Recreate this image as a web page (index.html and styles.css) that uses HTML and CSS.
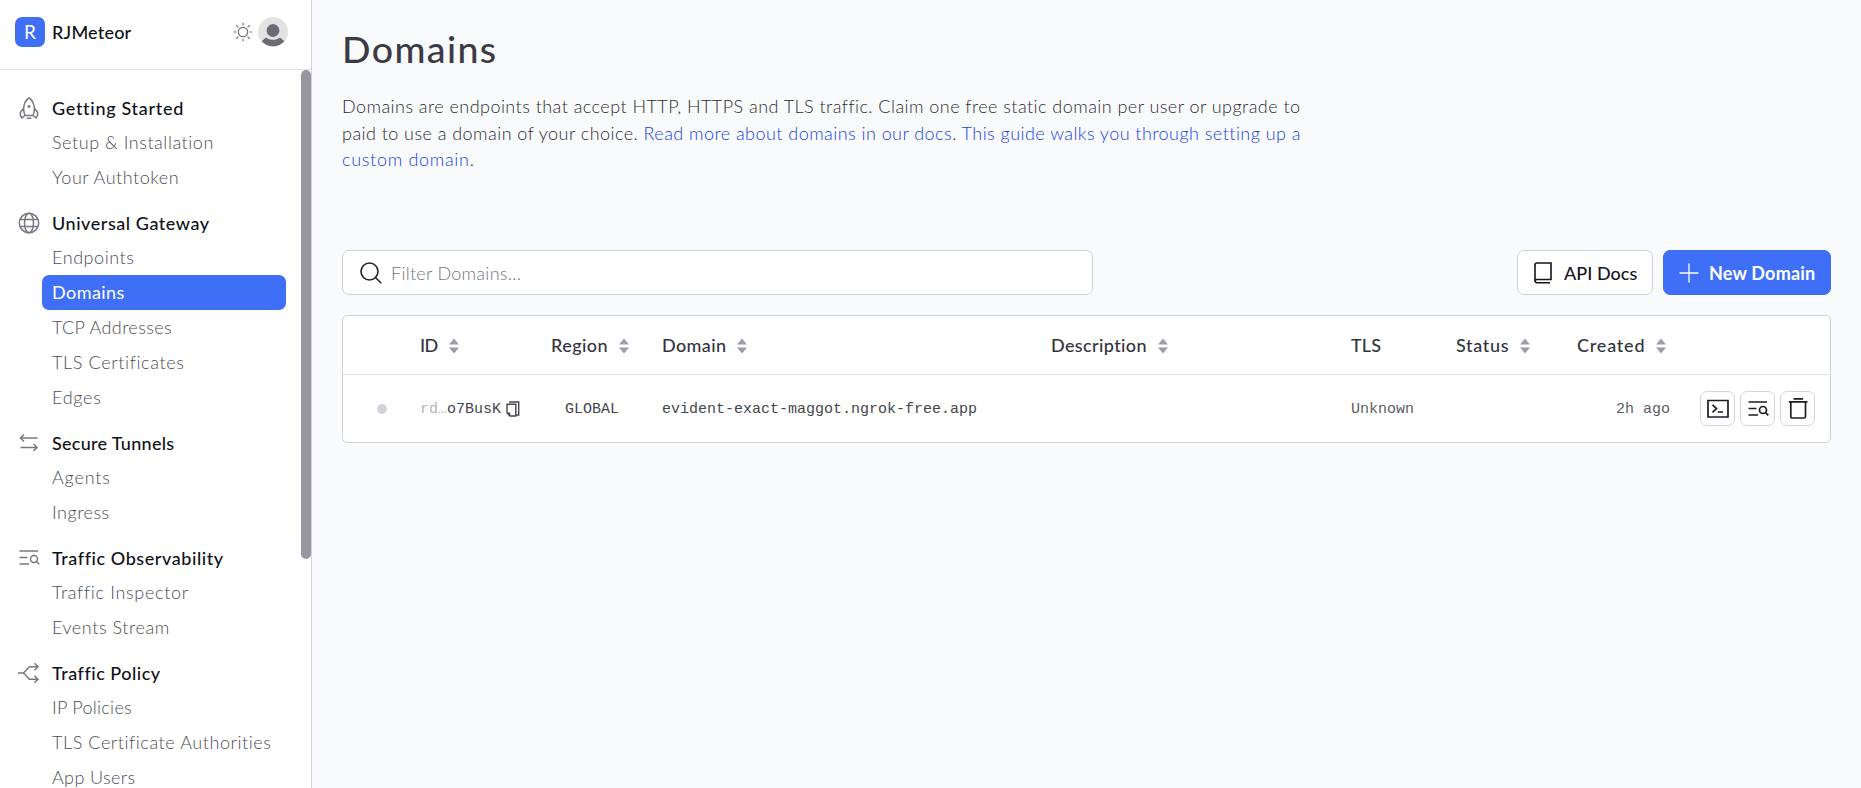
FILE: index.html
```
<!DOCTYPE html>
<html lang="en">
<head>
<meta charset="utf-8">
<title>Domains</title>
<link rel="stylesheet" href="styles.css">
</head>
<body>
<svg class="defs" width="0" height="0">
  <symbol id="i-search-list" viewBox="0 0 22 22"><path d="M1.5 4h18.500M1.5 10.500h8M1.5 17h9.500"/><circle cx="16" cy="12" r="3.500"/><path d="M18.500 14.500l2.800 2.800"/></symbol>
  <symbol id="i-sort" viewBox="0 0 10 16"><path d="M5 .5L10 6.5H0zM5 15.5L10 9.5H0z"/></symbol>
</svg>
<div class="app">
  <aside class="sidebar">
    <header class="account">
      <span class="logo">R</span>
      <span class="account-name ls-42">RJMeteor</span>
      <svg class="sun" viewBox="0 0 20 20"><circle cx="10" cy="10" r="4.7"/><path d="M10 .8v2.4M10 16.8v2.4M.8 10h2.4M16.8 10h2.4M3.2 3.2l2.2 2.2M14.6 14.6l2.2 2.2M3.2 16.8l2.2-2.2M14.6 5.4l2.2-2.2"/></svg>
      <svg class="avatar" viewBox="0 0 30 30"><circle cx="15" cy="15" r="15" fill="#e3e3e3"/><circle cx="15" cy="13.5" r="6.4" fill="#6a6b73"/><path d="M3.700 24.200L8 20.400c4 3.200 10 3.200 14 0l4.300 3.800A15 15 0 0 1 3.700 24.200z" fill="#6a6b73"/></svg>
    </header>
    <div class="nav-wrap">
      <nav class="nav">
        <section>
          <h2><svg viewBox="0 0 22 22"><path d="M7 18.500C4.400 12.500 5.500 4.500 11 .8c5.500 3.700 6.600 11.700 4 17.700zM5.600 11.200L2.400 15.200v3.200l1.500 2.400L7 18.500M16.400 11.200l3.200 4v3.200l-1.500 2.400L15 18.500M8.700 21.300h4.600M11 8v3M9.500 9.500h3"/></svg><span class="ls-92">Getting Started</span></h2>
          <a class="ls-77">Setup &amp; Installation</a>
          <a class="ls-74">Your Authtoken</a>
        </section>
        <section>
          <h2><svg viewBox="0 0 22 22"><circle cx="11" cy="11" r="9.700"/><ellipse cx="11" cy="11" rx="4.500" ry="9.700"/><path d="M2.300 7.500h17.400M2.300 14.500h17.400"/></svg><span class="ls-77">Universal Gateway</span></h2>
          <a class="ls-77">Endpoints</a>
          <a class="active ls-68">Domains</a>
          <a class="ls-60">TCP Addresses</a>
          <a class="ls-85">TLS Certificates</a>
          <a class="ls-91">Edges</a>
        </section>
        <section>
          <h2><svg viewBox="0 0 22 22"><path d="M19.500 6H3M6 2.500L2.500 6 6 9.500M2.500 15.500H19M15.500 12l3.500 3.500-3.500 3.500"/></svg><span class="ls-50">Secure Tunnels</span></h2>
          <a class="ls-102">Agents</a>
          <a class="ls-73">Ingress</a>
        </section>
        <section>
          <h2><svg><use href="#i-search-list"/></svg><span class="ls-79">Traffic Observability</span></h2>
          <a class="ls-91">Traffic Inspector</a>
          <a class="ls-79">Events Stream</a>
        </section>
        <section>
          <h2><svg viewBox="0 0 22 22"><path d="M0 11h5.500l6-6.300H20M16.500 1.200L20 4.700l-3.500 3.500M5.500 11l6 6.300H20M16.500 13.800l3.500 3.500-3.500 3.500"/></svg><span class="ls-73">Traffic Policy</span></h2>
          <a class="ls-50">IP Policies</a>
          <a class="ls-79">TLS Certificate Authorities</a>
          <a class="ls-60">App Users</a>
        </section>
      </nav>
      <div class="scrollbar"></div>
    </div>
  </aside>

  <main class="main">
    <h1>Domains</h1>
    <p class="intro">
      <span class="ls-68">Domains are endpoints that accept HTTP, HTTPS and TLS traffic. Claim one free static domain per user or upgrade to</span><br>
      <span class="ls-68">paid to use a domain of your choice. </span><a class="ls-68">Read more about domains in our docs</a><span class="ls-68">. </span><a class="ls-68">This guide walks you through setting up a</a><br>
      <a class="ls-91">custom domain</a>.
    </p>

    <div class="toolbar">
      <label class="filter">
        <svg viewBox="0 0 22 22"><circle cx="9.500" cy="9.500" r="8.500"/><path d="M15.500 15.500l5.700 5.700"/></svg>
        <span class="ls-50">Filter Domains...</span>
      </label>
      <button class="btn">
        <svg class="book" viewBox="0 0 18 22"><path d="M17 17.500H3a2 2 0 0 0-2 2V3a2 2 0 0 1 2-2h14zM1 18.500a2 2 0 0 0 2 2.200h13"/></svg>
        <span class="ls-25">API Docs</span>
      </button>
      <button class="btn primary">
        <svg class="plus" viewBox="0 0 20 20"><path d="M10 .5v19M.5 10h19"/></svg>
        <span class="ls-42">New Domain</span>
      </button>
    </div>

    <div class="table">
      <div class="row head">
        <div></div>
        <div><span class="ls-0">ID</span><svg><use href="#i-sort"/></svg></div>
        <div><span class="ls-68">Region</span><svg><use href="#i-sort"/></svg></div>
        <div><span class="ls-60">Domain</span><svg><use href="#i-sort"/></svg></div>
        <div><span class="ls-60">Description</span><svg><use href="#i-sort"/></svg></div>
        <div><span class="ls-42">TLS</span></div>
        <div><span class="ls-91">Status</span><svg><use href="#i-sort"/></svg></div>
        <div><span class="ls-102">Created</span><svg><use href="#i-sort"/></svg></div>
        <div></div>
      </div>
      <div class="row body">
        <div><i class="dot"></i></div>
        <div><span class="faded">rd…</span><span>o7BusK</span><svg class="copy" viewBox="0 0 14 16"><path d="M3 1h9.700v13H9.500"/><path d="M1 3.300h8.800v11.700H4L1 12z"/><path d="M1 11.500h3.300V15z" fill="currentColor" stroke="none"/></svg></div>
        <div class="region"><span>GLOBAL</span></div>
        <div><span>evident-exact-maggot.ngrok-free.app</span></div>
        <div></div>
        <div class="muted"><span>Unknown</span></div>
        <div></div>
        <div class="created"><span>2h ago</span></div>
        <div class="actions">
          <button><svg viewBox="0 0 22 22"><path d="M1 2.500h20v16.500H1zM5.500 6.800l4 3.800-4 3.800M10.700 14h5.300"/></svg></button>
          <button><svg><use href="#i-search-list"/></svg></button>
          <button><svg viewBox="0 0 22 22"><path d="M6.500 .8h9.500M1.800 3.800h18.700M3.800 4v14.500a1.500 1.500 0 0 0 1.500 1.500h11.700a1.500 1.500 0 0 0 1.500-1.500V4"/></svg></button>
        </div>
      </div>
    </div>
  </main>
</div>
</body>
</html>
```
FILE: styles.css
```
* { box-sizing: border-box; }
html, body { margin: 0; height: 100%; }
body {
  font: 300 18px/26.5px Lato, "Liberation Sans", sans-serif;
  color: #2c2b35;
  background: #f9fafc;
  overflow: hidden;
}
svg { display: block; flex: none; fill: none; stroke: currentColor; }
.defs { position: absolute; }
button { font: inherit; color: inherit; padding: 0; margin: 0; }
.app { display: flex; height: 788px; }

/* Sidebar */
.sidebar {
  width: 312px; flex: none; display: flex; flex-direction: column;
  background: #fff; border-right: 1px solid #d2d3db;
}
.account {
  height: 70px; flex: none; display: flex; align-items: flex-start;
  padding: 17px 23px 0 15px; border-bottom: 1px solid #e0e1e5;
}
.logo {
  width: 30px; height: 30px; border-radius: 7px; background: #3f6ff6;
  color: #fff; text-align: center; line-height: 30px; font-size: 19px; font-weight: 400;
}
.account-name { margin-left: 7px; line-height: 30px; font-weight: 500; color: #111119; white-space: nowrap; }
.sun { width: 20px; height: 20px; margin: 5px 5px 0 auto; color: #71717b; stroke-width: 1.200; }
.avatar { width: 30px; height: 30px; stroke: none; }
.nav-wrap { flex: 1; min-height: 0; display: flex; justify-content: space-between; overflow: hidden; }
.nav { width: 286px; padding-top: 20px; }
.nav section { margin-bottom: 10px; }
.nav h2 {
  margin: 0; height: 35px; padding-left: 18px; display: flex; align-items: center;
  font-size: 18px; font-weight: 500; color: #111119; white-space: nowrap;
}
.nav h2 span { padding-top: 1px; }
.nav h2 svg { width: 22px; height: 22px; margin-right: 12px; color: #777883; stroke-width: 1.500; }
.nav a {
  display: block; height: 35px; line-height: 35px; margin-left: 42px; padding-left: 10px;
  border-radius: 7px; color: #4c4d57; white-space: nowrap;
}
.nav a.active { background: #3f6ff6; color: #fff; font-weight: 400; }
.scrollbar { width: 10px; height: 489px; border-radius: 5px; background: #9695a0; }

/* Main */
.main { flex: 1; min-width: 0; padding: 0 30px; display: flex; flex-direction: column; }
h1 { margin: 26px 0 0; font-size: 37.500px; line-height: 45px; font-weight: 500; letter-spacing: 1.400px; color: #3c3b45; }
.intro { margin: 22px 0 0; white-space: nowrap; height: 80px; }
.intro a { color: #1742e4; }
.toolbar { display: flex; gap: 10px; margin-top: 77px; height: 45px; }
.filter {
  width: 751px; margin-right: auto; display: flex; align-items: center; padding-left: 17px;
  background: #fff; border: 1px solid #d0d2db; border-radius: 7px; color: #74757f;
}
.filter svg { width: 22px; height: 22px; margin-right: 9px; color: #22212c; stroke-width: 1.600; }
.filter span, .btn span { padding-top: 1px; }
.btn {
  width: 136px; display: flex; align-items: center; padding-left: 16px;
  border: 1px solid #d0d2db; border-radius: 7px; background: #fff; color: #16151f;
  font-weight: 500; white-space: nowrap;
}
.btn.primary { width: 168px; padding-left: 15px; background: #3f6ff6; border-color: #3f6ff6; color: #fff; font-weight: 700; }
.book { width: 18px; height: 22px; margin-right: 12px; stroke-width: 1.600; }
.plus { width: 20px; height: 20px; margin-right: 10px; stroke-width: 1.300; }

/* Table */
.table { margin-top: 20px; background: #fff; border: 1px solid #d0d2db; border-radius: 5px; }
.row { display: grid; grid-template-columns: 77px 131px 111px 389px 300px 105px 121px 123px 130px; align-items: center; }
.row > div { display: flex; align-items: center; white-space: nowrap; }
.head { height: 59px; border-bottom: 1px solid #e0e1e5; font-weight: 500; color: #34333d; }
.head span { padding-top: 1px; }
.head svg { width: 10px; height: 16px; margin: 2px 0 0 11px; fill: #9b9ea9; stroke: none; }
.body { height: 67px; font: 400 15px/20px "Liberation Mono", monospace; color: #45454f; }
.body span { padding-top: 2px; }
.faded { color: #b4b5bb; }
.copy { width: 14px; height: 16px; margin-left: 5px; stroke-width: 1.400; }
.dot { width: 10px; height: 10px; margin-left: 34px; border-radius: 50%; background: #d1d3dc; }
.row .region { padding-left: 14px; }
.row .muted { color: #5c5d67; }
.row .created { justify-content: flex-end; padding-right: 30px; color: #5c5d67; }
.row .actions { gap: 5px; }
.actions button {
  width: 35px; height: 35px; display: grid; place-items: center;
  background: #fff; border: 1px solid #d5d5de; border-radius: 7px; color: #1d1c27;
}
.actions svg { width: 22px; height: 22px; stroke-width: 1.700; }

/* Tracking steps, hundredths of a pixel before the common tightening */
[class*="ls-"] { letter-spacing: calc(var(--track) - .22px); }
.ls-0 { --track: -.3px; }
.ls-25 { --track: .25px; }
.ls-42 { --track: .42px; }
.ls-50 { --track: .5px; }
.ls-60 { --track: .6px; }
.ls-68 { --track: .67px; }
.ls-73 { --track: .73px; }
.ls-74 { --track: .74px; }
.ls-77 { --track: .77px; }
.ls-79 { --track: .79px; }
.ls-85 { --track: .85px; }
.ls-91 { --track: .91px; }
.ls-92 { --track: .92px; }
.ls-102 { --track: 1.02px; }
```
